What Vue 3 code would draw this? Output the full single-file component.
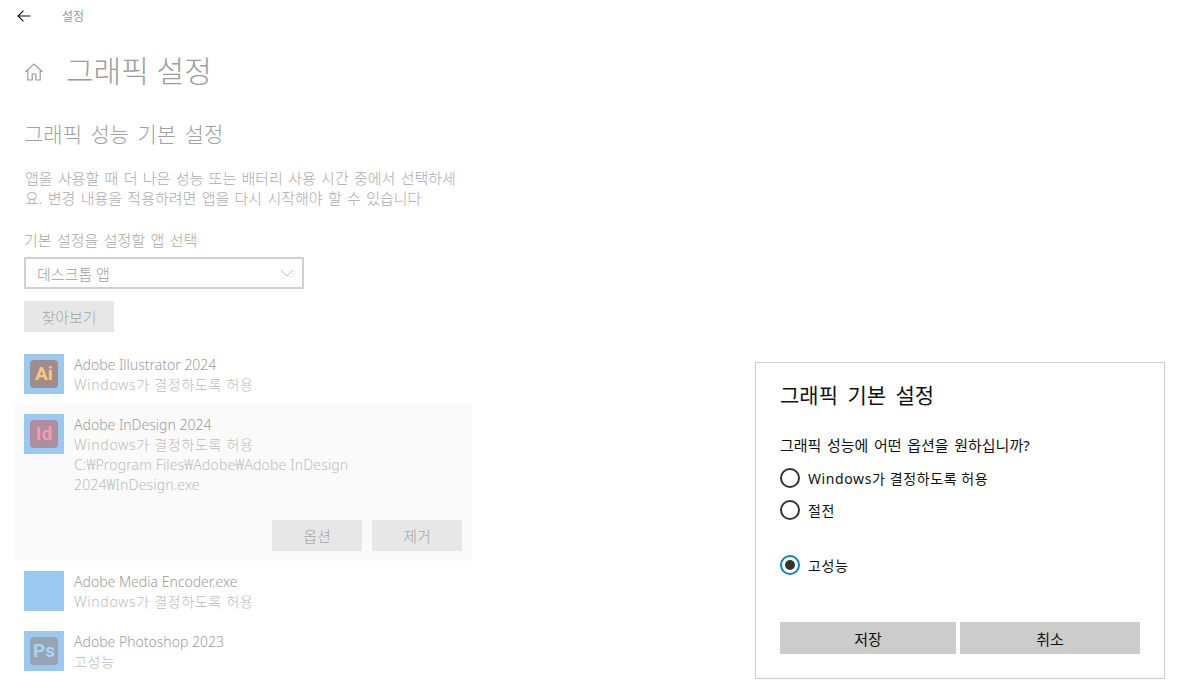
<script setup>
import { ref } from 'vue'

const apps = [
  { name: 'Adobe Illustrator 2024', pref: 'Windows가 결정하도록 허용', badge: 'Ai', bg: '#a08c8c', fg: '#fbc77e' },
  {
    name: 'Adobe InDesign 2024',
    pref: 'Windows가 결정하도록 허용',
    badge: 'Id',
    bg: '#ae8d9c',
    fg: '#fb96b8',
    path: 'C:₩Program Files₩Adobe₩Adobe InDesign 2024₩InDesign.exe',
    open: true
  },
  { name: 'Adobe Media Encoder.exe', pref: 'Windows가 결정하도록 허용' },
  { name: 'Adobe Photoshop 2023', pref: '고성능', badge: 'Ps', bg: '#97a5b3', fg: '#a8d4f8' }
]

const options = [
  { id: 'auto', label: 'Windows가 결정하도록 허용' },
  { id: 'save', label: '절전' },
  { id: 'high', label: '고성능' }
]

const picked = ref('high')
</script>

<template>
  <div class="page">
    <header class="topbar">
      <svg class="back" width="14" height="12" viewBox="0 0 14 12">
        <path d="M6.500 .7 1 6l5.500 5.300M1 6h12.500" fill="none" stroke="#111" stroke-width="1.100" />
      </svg>
      <span class="crumb">설정</span>
    </header>

    <div class="heading">
      <svg class="home" width="20" height="20" viewBox="0 0 20 20">
        <path
          d="M1.500 10 10 2l8.500 8M3.800 8.200V18h4.400v-6h3.600v6h4.400V8.200"
          fill="none"
          stroke="#9c9c9c"
          stroke-width="1.200"
        />
      </svg>
      <h1>그래픽 설정</h1>
    </div>

    <h2>그래픽 성능 기본 설정</h2>
    <p class="desc">앱을 사용할 때 더 나은 성능 또는 배터리 사용 시간 중에서 선택하세요. 변경 내용을 적용하려면 앱을 다시 시작해야 할 수 있습니다</p>

    <div class="field-label">기본 설정을 설정할 앱 선택</div>
    <div class="select">
      <span>데스크톱 앱</span>
      <svg width="14" height="8" viewBox="0 0 14 8">
        <path d="M.8.800 7 7l6.200-6.200" fill="none" stroke="#c4c4c4" stroke-width="1" />
      </svg>
    </div>
    <button class="btn browse">찾아보기</button>

    <ul class="apps">
      <li v-for="app in apps" :key="app.name" class="app" :class="{ open: app.open }">
        <div class="app-main">
          <div class="tile">
            <span v-if="app.badge" class="badge" :style="{ background: app.bg, color: app.fg }">{{ app.badge }}</span>
          </div>
          <div class="app-text">
            <div class="app-name">{{ app.name }}</div>
            <div class="app-pref">{{ app.pref }}</div>
            <div v-if="app.path" class="app-path">{{ app.path }}</div>
          </div>
        </div>
        <div v-if="app.open" class="app-actions">
          <button class="btn">옵션</button>
          <button class="btn">제거</button>
        </div>
      </li>
    </ul>

    <section class="dialog">
      <h3>그래픽 기본 설정</h3>
      <p class="question">그래픽 성능에 어떤 옵션을 원하십니까?</p>
      <div class="radios">
        <label v-for="o in options" :key="o.id" class="radio" :class="{ on: picked === o.id }" @click="picked = o.id">
          <span class="dot"></span>
          <span>{{ o.label }}</span>
        </label>
      </div>
      <div class="dialog-actions">
        <button class="dlg-btn save">저장</button>
        <button class="dlg-btn cancel">취소</button>
      </div>
    </section>
  </div>
</template>

<style>
html,
body {
  background: #fff;
  overflow: hidden;
}
</style>

<style scoped>
.page {
  position: relative;
  width: 1195px;
  height: 684px;
  overflow: hidden;
  padding-left: 24px;
  box-sizing: border-box;
  font-family: "Noto Sans", "Noto Sans CJK KR", sans-serif;
  font-size: 14px;
  color: #a0a0a0;
}
.topbar {
  height: 32px;
  display: flex;
  align-items: center;
  margin-left: -7px;
}
.crumb {
  margin-left: 31px;
  font-size: 12px;
  color: #9a9a9a;
}
.heading {
  display: flex;
  align-items: center;
  height: 44px;
  margin-top: 16px;
}
.home {
  margin-top: 4px;
}
h1 {
  margin: 2px 0 0 22px;
  font-size: 30px;
  font-weight: 300;
  color: #9c9c9c;
  line-height: 44px;
}
h2 {
  margin: 27px 0 0;
  font-size: 21px;
  font-weight: 300;
  word-spacing: 3px;
  line-height: 30px;
  color: #a0a0a0;
}
.desc {
  width: 434px;
  margin: 19px 0 0 1px;
  line-height: 20px;
  font-size: 15px;
  font-weight: 300;
  word-spacing: 1.400px;
  word-break: break-all;
  color: #ababab;
}
.field-label {
  margin-top: 22px;
  line-height: 20px;
  font-size: 15px;
  font-weight: 300;
  word-spacing: 1.500px;
  color: #a6a6a6;
}
.select {
  width: 280px;
  height: 32px;
  margin-top: 7px;
  box-sizing: border-box;
  border: 2px solid #d0d0d0;
  padding: 0 8px 0 11px;
  display: flex;
  align-items: center;
  justify-content: space-between;
  font-size: 15px;
  font-weight: 300;
  color: #a0a0a0;
}
.btn {
  width: 90px;
  height: 31px;
  padding: 0;
  border: 0;
  background: #e7e7e7;
  font: inherit;
  font-size: 15px;
  font-weight: 300;
  color: #a6a6a6;
}
.browse {
  display: block;
  margin-top: 12px;
}
.apps {
  list-style: none;
  margin: 12px 0 0 -10px;
  padding: 0;
  width: 458px;
}
.app {
  padding: 10px;
}
.app.open {
  background: #fafafa;
}
.app-main {
  display: flex;
  gap: 10px;
}
.tile {
  flex: none;
  width: 40px;
  height: 40px;
  background: #99c9f0;
  display: flex;
  align-items: center;
  justify-content: center;
}
.badge {
  width: 28px;
  height: 28px;
  padding-bottom: 2px;
  box-sizing: border-box;
  border-radius: 4px;
  display: flex;
  align-items: center;
  justify-content: center;
  font-family: "Roboto", sans-serif;
  font-size: 19px;
  font-weight: 700;
  line-height: 1;
}
.app-text {
  width: 300px;
  padding-top: 1px;
  line-height: 19.500px;
  font-weight: 300;
}
.app-name {
  color: #9c9c9c;
}
.app-pref {
  letter-spacing: .7px;
  color: #bcbcbc;
}
.app-path {
  margin-top: 1px;
  letter-spacing: .15px;
  color: #bcbcbc;
}
.app-actions {
  display: flex;
  justify-content: flex-end;
  gap: 10px;
  margin-top: 26px;
}
.dialog {
  position: absolute;
  left: 755px;
  top: 362px;
  width: 410px;
  height: 317px;
  box-sizing: border-box;
  border: 1px solid #cdcdcd;
  background: #fff;
  padding: 17px 24px 0;
  color: #111;
}
h3 {
  margin: 0;
  font-size: 21px;
  font-weight: 400;
  word-spacing: 4px;
  line-height: 30px;
}
.question {
  margin: 25px 0 0;
  line-height: 20px;
  font-size: 15px;
  word-spacing: 1.700px;
}
.radios {
  margin-top: 7px;
}
.radio {
  display: flex;
  align-items: center;
  gap: 8px;
  height: 32px;
  letter-spacing: .6px;
}
.radio:nth-child(3) {
  margin-top: 23px;
}
.dot {
  width: 20px;
  height: 20px;
  box-sizing: border-box;
  border: 2px solid #333;
  border-radius: 50%;
  display: flex;
  align-items: center;
  justify-content: center;
}
.radio.on .dot {
  border-color: #0f7fc8;
}
.radio.on .dot::after {
  content: "";
  width: 10px;
  height: 10px;
  border-radius: 50%;
  background: #333;
}
.dialog-actions {
  display: flex;
  gap: 4px;
  margin-top: 41px;
}
.dlg-btn {
  height: 32px;
  padding: 0;
  border: 0;
  background: #cccccc;
  font: inherit;
  font-size: 15px;
  color: #111;
}
.save {
  width: 176px;
}
.cancel {
  width: 180px;
}
</style>
